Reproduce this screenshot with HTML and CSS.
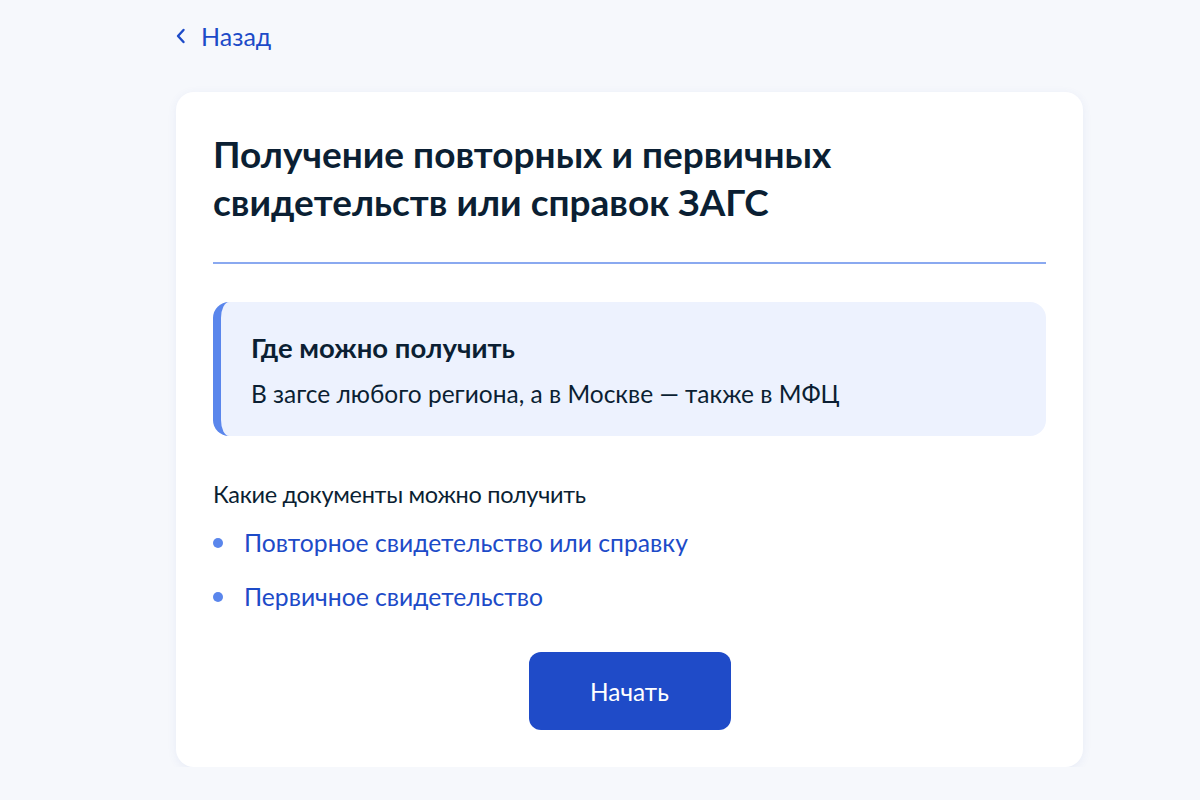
FILE: index.html
```html
<!DOCTYPE html>
<html lang="ru">
<head>
<meta charset="utf-8">
<title>Получение повторных и первичных свидетельств</title>
<link rel="stylesheet" href="styles.css">
</head>
<body>
<div class="page">
  <a class="back" href="#">
    <svg class="back-icon" width="10" height="16" viewBox="0 0 10 16"><path d="M7.5 2 L2 8 L7.5 14" fill="none" stroke="currentColor" stroke-width="2.4" stroke-linecap="round" stroke-linejoin="round"/></svg>
    <span>Назад</span>
  </a>
  <main class="card">
    <h1 class="title">Получение повторных и первичных свидетельств или справок ЗАГС</h1>
    <hr class="divider">
    <section class="info">
      <h2 class="info-title">Где можно получить</h2>
      <p class="info-text">В загсе любого региона, а в Москве — также в МФЦ</p>
    </section>
    <p class="lead">Какие документы можно получить</p>
    <ul class="links">
      <li><a href="#">Повторное свидетельство или справку</a></li>
      <li><a href="#">Первичное свидетельство</a></li>
    </ul>
    <div class="actions">
      <button class="btn">Начать</button>
    </div>
  </main>
</div>
</body>
</html>
```
FILE: styles.css
```css
* { box-sizing: border-box; }
html, body { margin: 0; padding: 0; }
body {
  background: #f6f8fc;
  font-family: Lato, "Noto Sans", sans-serif;
  color: #0b1f33;
}
.page {
  width: 907px;
  margin-left: 176px;
  padding-top: 21px;
}
.back {
  display: inline-flex;
  align-items: center;
  gap: 15px;
  color: #1d4bc8;
  text-decoration: none;
  font-size: 25px;
  line-height: 30px;
}
.back-icon { display: block; }
.card {
  margin-top: 41px;
  background: #ffffff;
  border-radius: 18px;
  box-shadow: 0 2px 10px rgba(60, 90, 180, 0.08);
  padding: 38px 37px 37px;
  display: flex;
  flex-direction: column;
}
.title {
  margin: 0;
  font-size: 37px;
  line-height: 48px;
  font-weight: 700;
  color: #0b1f33;
  max-width: 720px;
}
.divider {
  margin: 36px 0 38px;
  border: 0;
  height: 2px;
  background: #8aa9f0;
}
.info {
  background: #edf2fe;
  border-radius: 16px;
  border-left: 8px solid #5a86ec;
  padding: 29px 30px 25px;
}
.info-title {
  margin: 0;
  font-size: 27.5px;
  line-height: 34px;
  font-weight: 700;
}
.info-text {
  margin: 12px 0 0;
  font-size: 24.5px;
  line-height: 34px;
}
.lead {
  margin: 41px 0 0;
  font-size: 23.5px;
  line-height: 34px;
  letter-spacing: -0.3px;
}
.links {
  list-style: none;
  margin: 15px 0 0;
  padding: 0;
  display: flex;
  flex-direction: column;
  gap: 20px;
}
.links li {
  display: flex;
  align-items: center;
  gap: 21px;
  font-size: 24.7px;
  line-height: 34px;
}
.links li::before {
  content: "";
  width: 10px;
  height: 10px;
  border-radius: 50%;
  background: #5a86ec;
  flex: none;
}
.links a {
  color: #1d4bc8;
  text-decoration: none;
}
.actions {
  display: flex;
  justify-content: center;
  margin-top: 38px;
}
.btn {
  width: 202px;
  height: 78px;
  border: 0;
  border-radius: 12px;
  background: #1f4bc8;
  color: #ffffff;
  font-family: Lato, "Noto Sans", sans-serif;
  font-size: 24.4px;
  cursor: pointer;
}
```
